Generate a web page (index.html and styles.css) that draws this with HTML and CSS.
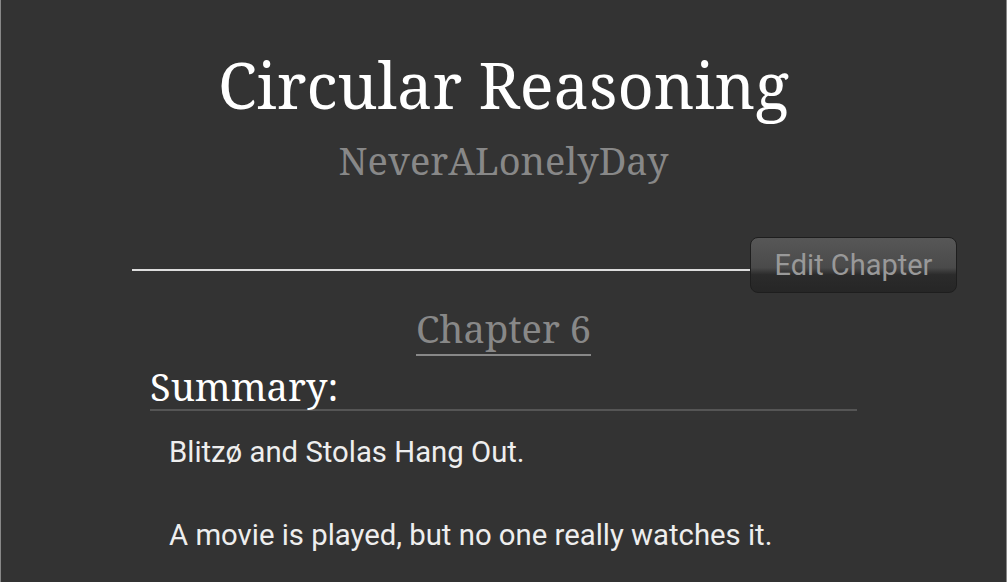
FILE: index.html
```html
<!DOCTYPE html>
<html>
    <head>
        <meta charset="utf-8">
        <title>Circular Reasoning - Chapter 6</title>
        <link rel="stylesheet" href="styles.css">
    </head>
    <body>
        <div class="page">
            <header class="work-head">
                <h1 class="work-title">Circular Reasoning</h1>
                <div class="work-author">NeverALonelyDay</div>
            </header>
            <div class="edit-row">
                <div class="rule"></div>
                <button class="edit-btn">Edit Chapter</button>
            </div>
            <h2 class="chapter-title"><span>Chapter 6</span></h2>
            <section class="summary">
                <h3 class="summary-head">Summary:</h3>
                <div class="summary-body">
                    <p>Blitzø and Stolas Hang Out.</p>
                    <p>A movie is played, but no one really watches it.</p>
                </div>
            </section>
        </div>
    </body>
</html>
```

FILE: styles.css
```css
*{
    margin: 0;
    padding: 0;
    box-sizing: border-box;
}
html, body{
    background: #333;
    height: 100%;
    overflow: hidden;
}
.page{
    min-height: 100%;
    border-left: 1px solid #888;
    border-right: 1px solid #888;
    color: #fff;
    font-family: "Noto Serif", "DejaVu Serif", serif;
}
.work-head{
    text-align: center;
    padding-top: 45px;
}
.work-title{
    font-weight: normal;
    font-size: 63px;
    line-height: 80px;
}
.work-author{
    color: #888;
    font-size: 38px;
    line-height: 50px;
    margin-top: 10px;
}
.edit-row{
    display: flex;
    align-items: center;
    margin: 52px 0 0 131px;
    width: 825px;
}
.rule{
    flex: 1;
    height: 2px;
    background: #ddd;
    margin-top: 9px;
}
.edit-btn{
    width: 207px;
    height: 56px;
    border: 1px solid #1e1e1e;
    border-radius: 8px;
    background: linear-gradient(#575757, #4a4a4a 55%, #2b2b2b 68%, #262626);
    color: #999;
    font-family: Roboto, sans-serif;
    font-size: 29px;
}
.chapter-title{
    text-align: center;
    font-weight: normal;
    font-size: 38px;
    line-height: 46px;
    margin-top: 12px;
}
.chapter-title span{
    color: #888;
    border-bottom: 2px solid #888;
}
.summary{
    width: 707px;
    margin: 12px auto 0;
}
.summary-head{
    font-weight: normal;
    font-size: 38px;
    line-height: 46px;
    border-bottom: 2px solid #555;
}
.summary-body{
    padding: 25px 0 0 19px;
    font-family: Roboto, sans-serif;
    font-size: 29.3px;
    color: #eee;
}
.summary-body p{
    line-height: 32px;
    margin-bottom: 51px;
}
```
